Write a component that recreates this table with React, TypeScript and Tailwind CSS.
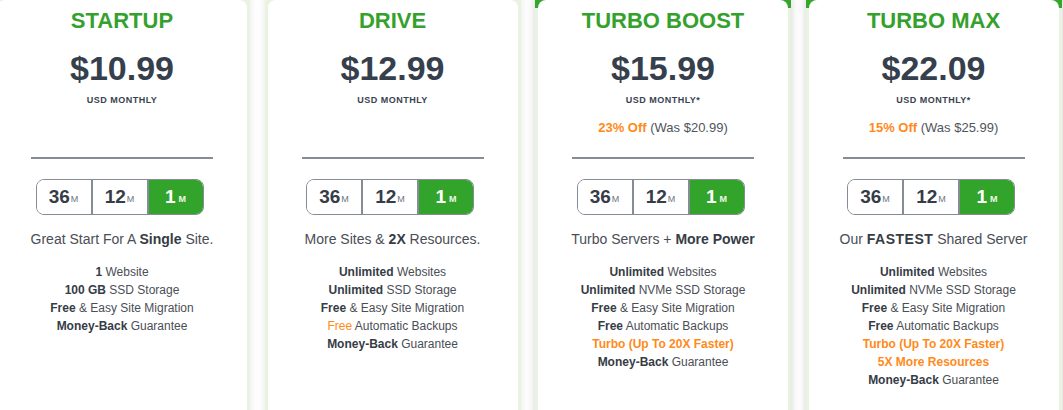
import React from "react";

type Seg = { text: string; b?: boolean; o?: boolean };
type Plan = {
  name: string;
  price: string;
  star?: boolean;
  off?: string;
  was?: string;
  tagline: Seg[];
  features: Seg[][];
  featured?: boolean;
};

const plans: Plan[] = [
  {
    name: "STARTUP",
    price: "$10.99",
    tagline: [{ text: "Great Start For A " }, { text: "Single", b: true }, { text: " Site." }],
    features: [
      [{ text: "1", b: true }, { text: " Website" }],
      [{ text: "100 GB", b: true }, { text: " SSD Storage" }],
      [{ text: "Free", b: true }, { text: " & Easy Site Migration" }],
      [{ text: "Money-Back", b: true }, { text: " Guarantee" }],
    ],
  },
  {
    name: "DRIVE",
    price: "$12.99",
    tagline: [{ text: "More Sites & " }, { text: "2X", b: true }, { text: " Resources." }],
    features: [
      [{ text: "Unlimited", b: true }, { text: " Websites" }],
      [{ text: "Unlimited", b: true }, { text: " SSD Storage" }],
      [{ text: "Free", b: true }, { text: " & Easy Site Migration" }],
      [{ text: "Free", o: true }, { text: " Automatic Backups" }],
      [{ text: "Money-Back", b: true }, { text: " Guarantee" }],
    ],
  },
  {
    name: "TURBO BOOST",
    price: "$15.99",
    star: true,
    off: "23% Off",
    was: " (Was $20.99)",
    featured: true,
    tagline: [{ text: "Turbo Servers + " }, { text: "More Power", b: true }],
    features: [
      [{ text: "Unlimited", b: true }, { text: " Websites" }],
      [{ text: "Unlimited", b: true }, { text: " NVMe SSD Storage" }],
      [{ text: "Free", b: true }, { text: " & Easy Site Migration" }],
      [{ text: "Free", b: true }, { text: " Automatic Backups" }],
      [{ text: "Turbo (Up To 20X Faster)", b: true, o: true }],
      [{ text: "Money-Back", b: true }, { text: " Guarantee" }],
    ],
  },
  {
    name: "TURBO MAX",
    price: "$22.09",
    star: true,
    off: "15% Off",
    was: " (Was $25.99)",
    featured: true,
    tagline: [{ text: "Our " }, { text: "FASTEST", b: true }, { text: " Shared Server" }],
    features: [
      [{ text: "Unlimited", b: true }, { text: " Websites" }],
      [{ text: "Unlimited", b: true }, { text: " NVMe SSD Storage" }],
      [{ text: "Free", b: true }, { text: " & Easy Site Migration" }],
      [{ text: "Free", b: true }, { text: " Automatic Backups" }],
      [{ text: "Turbo (Up To 20X Faster)", b: true, o: true }],
      [{ text: "5X More Resources", b: true, o: true }],
      [{ text: "Money-Back", b: true }, { text: " Guarantee" }],
    ],
  },
];

function SegText({ s }: { s: Seg }) {
  const cls = [
    s.b ? "font-bold" : "",
    s.o ? "text-[#ff8a1a]" : s.b ? "text-[#363c45]" : "",
    s.text === "FASTEST" ? "tracking-[0.5px]" : "",
  ].join(" ");
  return <span className={cls}>{s.text}</span>;
}

function Toggle() {
  return (
    <div className="flex justify-center pr-[5px]">
      <div className="flex h-[36px] w-[168px] overflow-hidden rounded-[8px] border border-[#858c95]">
        <div className="flex flex-1 items-center justify-center border-r-2 border-[#858c95] bg-white">
          <span className="text-[19px] font-bold text-[#363d48]">36</span>
          <span className="ml-[1px] mt-[5px] text-[9px] text-[#6d737c]">M</span>
        </div>
        <div className="flex flex-1 items-center justify-center border-r-2 border-[#858c95] bg-white">
          <span className="text-[19px] font-bold text-[#363d48]">12</span>
          <span className="ml-[1px] mt-[5px] text-[9px] text-[#6d737c]">M</span>
        </div>
        <div className="flex flex-1 items-center justify-center bg-[#33a42b]">
          <span className="text-[19px] font-bold text-white">1</span>
          <span className="ml-[3px] mt-[5px] text-[9px] font-bold text-[#eef8e8]">M</span>
        </div>
      </div>
    </div>
  );
}

function Card({ p }: { p: Plan }) {
  const outer = p.featured
    ? "bg-[linear-gradient(to_bottom,#35a52c_0px,#35a52c_18px,#e9f3e2_18px)] shadow-[0_0_10px_rgba(0,0,0,0.18)]"
    : "bg-[#e9f3e2] shadow-[0_0_8px_rgba(0,0,0,0.1)]";
  return (
    <div className={`w-[256px] shrink-0 rounded-[10px] px-[3px] pt-[10px] ${outer}`}>
      <div className="h-[520px] rounded-[8px] bg-white pt-[8px] text-center">
        <div className="text-[22px] font-bold leading-[26px] text-[#35a12d]">{p.name}</div>
        <div className="mt-[14px] text-[34px] font-bold leading-[40px] text-[#36404d]">{p.price}</div>
        <div className="mt-[6px] text-[9px] font-bold leading-[12px] tracking-[0.5px] text-[#3a4350]">
          USD MONTHLY{p.star ? "*" : ""}
        </div>
        <div className="mt-[14px] h-[16px] text-[13px] leading-[16px] text-[#50555c]">
          {p.off && (
            <>
              <span className="font-bold text-[#ff8a1a]">{p.off}</span>
              {p.was}
            </>
          )}
        </div>
        <div className="mx-auto mt-[21px] h-[2px] w-[182px] bg-[#858c95]" />
        <div className="mt-[20px]">
          <Toggle />
        </div>
        <div className="mt-[14px] text-[14px] leading-[20px] text-[#4a4e55]">
          {p.tagline.map((s, i) => (
            <SegText key={i} s={s} />
          ))}
        </div>
        <div className="mt-[14px] text-[12px] leading-[18px] text-[#4a4e55]">
          {p.features.map((f, i) => (
            <div key={i}>
              {f.map((s, j) => (
                <SegText key={j} s={s} />
              ))}
            </div>
          ))}
        </div>
      </div>
    </div>
  );
}

export default function App() {
  return (
    <div
      className="h-[410px] w-[1063px] overflow-hidden bg-white"
      style={{ fontFamily: '"Liberation Sans", Arial, sans-serif' }}
    >
      <div className="ml-[-6px] mt-[-10px] flex gap-[14.5px]">
        {plans.map((p) => (
          <Card key={p.name} p={p} />
        ))}
      </div>
    </div>
  );
}
